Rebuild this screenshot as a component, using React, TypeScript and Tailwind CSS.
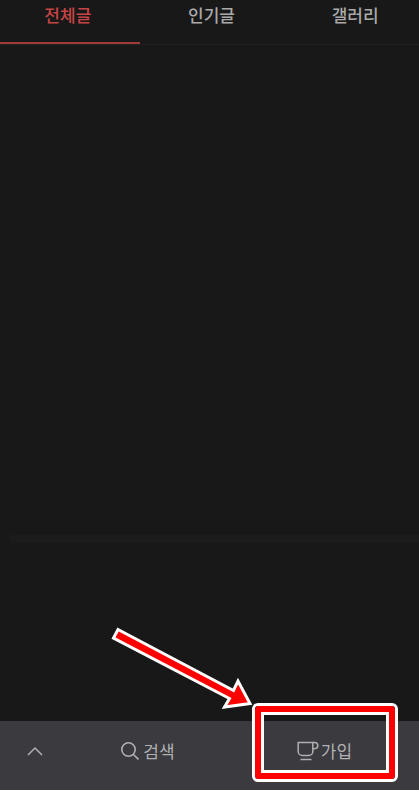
import React from "react";

const tabs = ["전체글", "인기글", "갤러리"];

function ChevronUpIcon() {
  return (
    <svg width="16" height="10" viewBox="0 0 16 10" fill="none" stroke="currentColor" strokeWidth="1.5" aria-hidden="true">
      <path d="M1 9 8 2l7 7" />
    </svg>
  );
}

function SearchIcon() {
  return (
    <svg width="18" height="18" viewBox="0 0 18 18" fill="none" stroke="currentColor" strokeWidth="1.6" aria-hidden="true">
      <circle cx="7.5" cy="7.5" r="6.7" />
      <path d="m12.2 12.2 5.3 5.3" />
    </svg>
  );
}

function CupIcon() {
  return (
    <svg width="22" height="20" viewBox="0 0 22 20" fill="none" stroke="currentColor" strokeWidth="1.5" aria-hidden="true">
      <path d="M1.2 1.5h14.6v9a4 4 0 0 1-4 4H5.2a4 4 0 0 1-4-4z" />
      <path d="M15.8 1.5h1.8c2 0 3.2 1.1 3.2 3.1s-1.2 3.1-3.2 3.1h-1.8" />
      <path d="M3.5 18.5h11" />
    </svg>
  );
}

function Highlight() {
  return (
    <span className="pointer-events-none absolute top-[-18px] left-1/2 -ml-[71px] h-[79px] w-[146px]">
      <span className="block h-full rounded-md border-3 border-white bg-clip-padding">
        <span className="block h-full rounded-sm border-6 border-[#fe0000]">
          <span className="block h-full border-3 border-white" />
        </span>
      </span>
      <svg className="absolute right-full bottom-full -mr-1 -mb-2" width="148" height="88" viewBox="0 0 148 88" aria-hidden="true">
        <path
          d="M10 6.500 125.500 67.500 130 58 142 80.500 116.500 84 121.500 75.500 5.500 15z"
          fill="#fe0000"
          stroke="#ffffff"
          strokeWidth="3"
        />
      </svg>
    </span>
  );
}

export default function App() {
  return (
    <div className="flex min-h-screen flex-col overflow-hidden bg-[#181818] font-['Noto_Sans_CJK_KR',sans-serif] text-[17px] leading-6 text-[#a9a9a9]">
      <nav className="-mr-2 -ml-1 grid grid-cols-3 border-b border-[#222222]">
        {tabs.map((tab, index) => (
          <button
            key={tab}
            type="button"
            className={
              index === 0
                ? "border-b-2 border-[#a13a3a] pt-[3px] pb-[15px] font-medium text-[#c74444]"
                : "border-b-2 border-transparent pt-[3px] pb-[15px] font-medium"
            }
          >
            {tab}
          </button>
        ))}
      </nav>
      <main className="flex flex-1 flex-col justify-end pb-[178px]">
        <hr className="ml-[9px] h-2 border-0 bg-[#1b1b1b]" />
      </main>
      <footer className="grid h-[69px] grid-cols-[70px_156px_1fr] bg-[#3a3a3f] pb-[10px] text-[#b0b0b2]">
        <button type="button" aria-label="위로" className="flex items-center justify-center">
          <ChevronUpIcon />
        </button>
        <button type="button" className="flex items-center justify-center gap-1">
          <SearchIcon />
          검색
        </button>
        <button type="button" className="relative flex items-center justify-center gap-0.5 pl-1">
          <CupIcon />
          가입
          <Highlight />
        </button>
      </footer>
    </div>
  );
}
